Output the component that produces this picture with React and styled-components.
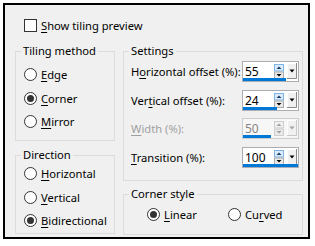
import React from 'react';
import styled, { createGlobalStyle } from 'styled-components';

const Global = createGlobalStyle`
  html, body { margin: 0; padding: 0; background: #ffffff; }
  body {
    font-family: "Noto Sans", "Segoe UI", sans-serif;
    font-size: 11px;
    color: #000;
  }
`;

const Page = styled.div`
  width: 315px;
  height: 246px;
  box-sizing: border-box;
  padding: 3px 5px 7px 3px;
  background: #ffffff;
`;

const Frame = styled.div`
  height: 100%;
  box-sizing: border-box;
  border: 2px solid #000;
  background: #f0f0f0;
  display: flex;
  flex-direction: column;
`;

const CheckRow = styled.label`
  display: flex;
  align-items: center;
  gap: 4px;
  height: 16px;
  margin: 12px 0 0 19px;
  font-size: 11.2px;
`;

const Box = styled.span`
  width: 13px;
  height: 13px;
  box-sizing: border-box;
  border: 1px solid #333;
  background: #fff;
  flex: none;
`;

const Columns = styled.div`
  display: grid;
  grid-template-columns: 100px 180px;
  column-gap: 8px;
  margin: 11px 0 0 10px;
`;

const Column = styled.div`
  display: flex;
  flex-direction: column;
  gap: ${p => p.$gap}px;
`;

const Group = styled.fieldset`
  margin: 0;
  padding: 0;
  min-width: 0;
  box-sizing: border-box;
  height: ${p => p.$h}px;
  border: 1px solid #dcdcdc;
`;

const Legend = styled.legend`
  margin-left: 5px;
  padding: 0 2px;
  line-height: 14px;
  font-size: 11.2px;
`;

const RadioList = styled.div`
  display: flex;
  flex-direction: ${p => (p.$row ? 'row' : 'column')};
  padding: ${p => p.$pt}px 0 0 ${p => p.$pl}px;
  font-size: 11.2px;
`;

const RadioRow = styled.label`
  display: flex;
  align-items: center;
  gap: 4px;
  height: 23.5px;
  width: ${p => (p.$w ? `${p.$w}px` : 'auto')};
`;

const Circle = styled.span`
  width: 13px;
  height: 13px;
  box-sizing: border-box;
  border: 1px solid #333;
  border-radius: 50%;
  background: #fff;
  flex: none;
  display: flex;
  align-items: center;
  justify-content: center;
  &::after {
    content: '';
    display: ${p => (p.$on ? 'block' : 'none')};
    width: 7px;
    height: 7px;
    border-radius: 50%;
    background: #333;
  }
`;

const Mn = styled.span`
  text-decoration: underline;
  text-underline-offset: 2px;
  text-decoration-thickness: 1px;
`;

const Settings = styled.div`
  display: flex;
  flex-direction: column;
  gap: 7.7px;
  padding: 3px 0 0 7px;
  font-size: 11.2px;
`;

const SettingRow = styled.div`
  display: grid;
  grid-template-columns: 111px 57px;
  align-items: center;
  height: 21px;
`;

const FieldLabel = styled.span`
  color: ${p => (p.$disabled ? '#a0a0a0' : '#000')};
  white-space: nowrap;
`;

const Spin = styled.div`
  position: relative;
  box-sizing: border-box;
  width: 57px;
  height: 21px;
  border: 1px solid ${p => (p.$disabled ? '#cccccc' : '#abadb3')};
  background: ${p => (p.$disabled ? '#f7f7f7' : '#ffffff')};
  display: flex;
  align-items: flex-start;
`;

const Value = styled.span`
  width: 29px;
  padding-left: 2px;
  line-height: 19px;
  font-size: 12px;
  color: ${p => (p.$disabled ? '#838383' : '#000')};
`;

const Arrows = styled.svg`
  margin-top: 2px;
  flex: none;
`;

const Drop = styled.svg`
  margin: 1px 0 0 3px;
  flex: none;
`;

const Bar = styled.span`
  position: absolute;
  left: 0;
  bottom: 0;
  height: 3px;
  background: #0078d7;
`;

function SpinBox({ value, frac, disabled }) {
  const arrow = disabled ? '#a0a0a0' : '#000';
  return (
    <Spin $disabled={disabled}>
      <Value $disabled={disabled}>{value}</Value>
      <Arrows width="10" height="15" viewBox="0 0 10 15">
        <rect x="0.5" y="0.5" width="9" height="6.5" fill={disabled ? '#f0f0f0' : '#dcecfc'} stroke={disabled ? '#cfcfcf' : '#7eb4ea'} />
        <rect x="0.5" y="8" width="9" height="6.5" fill="#e9e9e9" stroke={disabled ? '#cfcfcf' : '#acacac'} />
        <path d="M2.5 5 L5 2.5 L7.5 5 Z" fill={disabled ? '#a0a0a0' : '#1a3e6a'} />
        <path d="M2.5 10 L5 12.5 L7.5 10 Z" fill={arrow} />
      </Arrows>
      <Drop width="10" height="16" viewBox="0 0 10 16">
        <rect x="0" y="0" width="10" height="16" fill="#f0f0f0" />
        <path d="M0.5 15.5 V0.5 H9.5" fill="none" stroke="#ffffff" />
        <path d="M0 15.5 H9.5 V0" fill="none" stroke={disabled ? '#c8c8c8' : '#8a8a8a'} />
        <path d="M2.5 6.5 L7.5 6.5 L5 9.5 Z" fill={arrow} />
      </Drop>
      <Bar style={{ width: `${Math.round(frac * 55)}px` }} />
    </Spin>
  );
}

export default function App() {
  return (
    <Page>
      <Global />
      <Frame>
        <CheckRow>
          <Box />
          <span><Mn>S</Mn>how tiling preview</span>
        </CheckRow>
        <Columns>
          <Column $gap={7}>
            <Group $h={97}>
              <Legend>Tiling method</Legend>
              <RadioList $pt={5} $pl={8}>
                <RadioRow><Circle /><span><Mn>E</Mn>dge</span></RadioRow>
                <RadioRow><Circle $on /><span><Mn>C</Mn>orner</span></RadioRow>
                <RadioRow><Circle /><span><Mn>M</Mn>irror</span></RadioRow>
              </RadioList>
            </Group>
            <Group $h={86}>
              <Legend>Direction</Legend>
              <RadioList $pt={0} $pl={8}>
                <RadioRow><Circle /><span><Mn>H</Mn>orizontal</span></RadioRow>
                <RadioRow><Circle /><span><Mn>V</Mn>ertical</span></RadioRow>
                <RadioRow><Circle $on /><span><Mn>B</Mn>idirectional</span></RadioRow>
              </RadioList>
            </Group>
          </Column>
          <Column $gap={6}>
            <Group $h={137}>
              <Legend>Settings</Legend>
              <Settings>
                <SettingRow>
                  <FieldLabel>H<Mn>o</Mn>rizontal offset (%):</FieldLabel>
                  <SpinBox value="55" frac={0.775} />
                </SettingRow>
                <SettingRow>
                  <FieldLabel>Ver<Mn>t</Mn>ical offset (%):</FieldLabel>
                  <SpinBox value="24" frac={0.62} />
                </SettingRow>
                <SettingRow>
                  <FieldLabel $disabled><Mn>W</Mn>idth (%):</FieldLabel>
                  <SpinBox value="50" frac={0.5} disabled />
                </SettingRow>
                <SettingRow>
                  <FieldLabel><Mn>T</Mn>ransition (%):</FieldLabel>
                  <SpinBox value="100" frac={1} />
                </SettingRow>
              </Settings>
            </Group>
            <Group $h={48}>
              <Legend>Corner style</Legend>
              <RadioList $row $pt={2} $pl={23}>
                <RadioRow $w={81}><Circle $on /><span><Mn>L</Mn>inear</span></RadioRow>
                <RadioRow><Circle /><span>Cu<Mn>r</Mn>ved</span></RadioRow>
              </RadioList>
            </Group>
          </Column>
        </Columns>
      </Frame>
    </Page>
  );
}
